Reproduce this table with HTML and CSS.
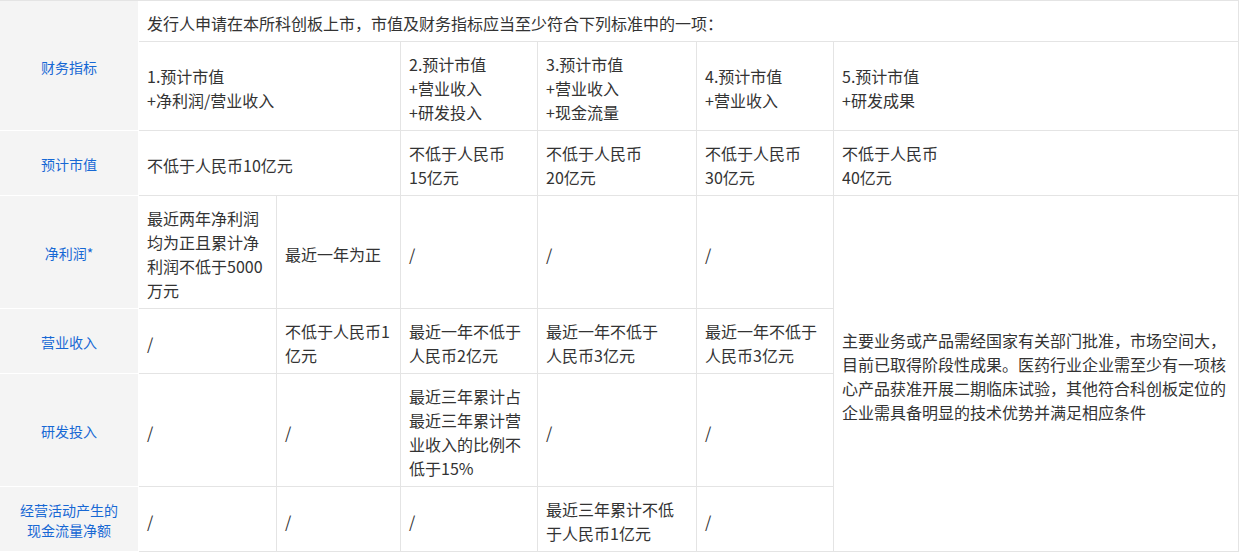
FILE: index.html
```html
<!DOCTYPE html>
<html lang="zh-CN">
<head>
<meta charset="utf-8">
<title>科创板上市标准</title>
<link rel="stylesheet" href="styles.css">
</head>
<body>
<table class="std">
  <colgroup>
    <col class="c-label">
    <col class="c1">
    <col class="c2">
    <col class="c3">
    <col class="c4">
    <col class="c5">
    <col class="c6">
  </colgroup>
  <tbody>
    <tr class="r1">
      <th class="lbl" rowspan="2">财务指标</th>
      <td colspan="6">发行人申请在本所科创板上市，市值及财务指标应当至少符合下列标准中的一项：</td>
    </tr>
    <tr class="r3l">
      <td colspan="2">1.预计市值<br>+净利润/营业收入</td>
      <td>2.预计市值<br>+营业收入<br>+研发投入</td>
      <td>3.预计市值<br>+营业收入<br>+现金流量</td>
      <td>4.预计市值<br>+营业收入</td>
      <td>5.预计市值<br>+研发成果</td>
    </tr>
    <tr>
      <th class="lbl">预计市值</th>
      <td colspan="2">不低于人民币10亿元</td>
      <td>不低于人民币<br>15亿元</td>
      <td>不低于人民币<br>20亿元</td>
      <td>不低于人民币<br>30亿元</td>
      <td>不低于人民币<br>40亿元</td>
    </tr>
    <tr>
      <th class="lbl">净利润*</th>
      <td>最近两年净利润<br>均为正且累计净<br>利润不低于5000<br>万元</td>
      <td>最近一年为正</td>
      <td>/</td>
      <td>/</td>
      <td>/</td>
      <td class="long" rowspan="4">主要业务或产品需经国家有关部门批准，市场空间大，目前已取得阶段性成果。医药行业企业需至少有一项核心产品获准开展二期临床试验，其他符合科创板定位的企业需具备明显的技术优势并满足相应条件</td>
    </tr>
    <tr>
      <th class="lbl">营业收入</th>
      <td>/</td>
      <td>不低于人民币1<br>亿元</td>
      <td>最近一年不低于<br>人民币2亿元</td>
      <td>最近一年不低于<br>人民币3亿元</td>
      <td>最近一年不低于<br>人民币3亿元</td>
    </tr>
    <tr>
      <th class="lbl">研发投入</th>
      <td>/</td>
      <td>/</td>
      <td>最近三年累计占<br>最近三年累计营<br>业收入的比例不<br>低于15%</td>
      <td>/</td>
      <td>/</td>
    </tr>
    <tr>
      <th class="lbl">经营活动产生的<br>现金流量净额</th>
      <td>/</td>
      <td>/</td>
      <td>/</td>
      <td>最近三年累计不低<br>于人民币1亿元</td>
      <td>/</td>
    </tr>
  </tbody>
</table>
</body>
</html>
```

FILE: styles.css
```css
html, body {
  margin: 0;
  padding: 0;
  background: #ffffff;
}

body {
  font-family: "Noto Sans CJK SC", "Noto Sans", sans-serif;
  color: #333333;
}

.std {
  width: 1239px;
  table-layout: fixed;
  border-collapse: separate;
  border-spacing: 0;
  border-top: 1px solid #e4e4e4;
}

.c-label { width: 139px; }
.c1 { width: 138px; }
.c2 { width: 124px; }
.c3 { width: 137px; }
.c4 { width: 159px; }
.c5 { width: 137px; }
.c6 { width: 405px; }

.std td,
.std th {
  border-right: 1px solid #e4e4e4;
  border-bottom: 1px solid #e4e4e4;
  vertical-align: middle;
  text-align: left;
  font-size: 16px;
  line-height: 24px;
  font-weight: normal;
  padding: 10px 6px 6px 8px;
  white-space: nowrap;
  overflow: hidden;
}

.std th.lbl {
  background: #f4f4f4;
  border-right-color: #ffffff;
  border-bottom-color: #ffffff;
  color: #1768d4;
  font-size: 14px;
  line-height: 20px;
  text-align: center;
  padding: 9px 4px 7px 4px;
}

.std td.long {
  white-space: normal;
  padding-right: 4px;
}
```
